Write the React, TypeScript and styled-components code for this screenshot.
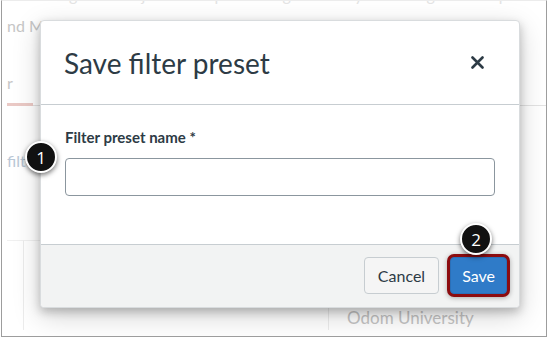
import React from "react";
import styled, { createGlobalStyle } from "styled-components";

const Global = createGlobalStyle`
  html, body { margin: 0; padding: 0; background: #ffffff; }
  body { font-family: Lato, "Open Sans", sans-serif; }
  * { box-sizing: border-box; }
`;

const Frame = styled.div`
  position: relative;
  width: 546px;
  height: 337px;
  margin-left: 1px;
  border-left: 1px solid #9d9d9d;
  border-right: 1px solid #9d9d9d;
  border-bottom: 1px solid #9d9d9d;
  border-top: 1px solid #ececec;
  overflow: hidden;
  background: #ffffff;
`;

const Page = styled.div`
  display: flex;
  flex-direction: column;
  padding-left: 5px;
  color: #c6c6c6;
  font-size: 16px;
`;

const ClippedLine = styled.div`
  margin-top: -17px;
  height: 22px;
  line-height: 22px;
  white-space: nowrap;
  color: #e4e4e4;
  padding-left: 62px;
  word-spacing: 60px;
`;

const TextLine = styled.div`
  margin-top: 9px;
  line-height: 22px;
  white-space: nowrap;
`;

const TabBar = styled.div`
  margin-top: 37px;
  display: flex;
  border-bottom: 1px solid #e3e3e3;
`;

const Tab = styled.div`
  width: 26px;
  height: 32px;
  line-height: 18px;
  border-bottom: 3px solid #eac9c5;
  margin-bottom: -1px;
`;

const FilterHint = styled.div`
  margin-top: 44px;
  color: #b9c7d6;
  line-height: 22px;
`;

const TableArea = styled.div`
  margin-top: 68px;
  display: flex;
  height: 90px;
`;

const TableCell = styled.div<{ $w: number }>`
  width: ${(p) => p.$w}px;
  border-top: 1px solid #f0f0f0;
  border-right: 1px solid #ececec;
`;

const University = styled.div`
  padding: 67px 0 0 18px;
  color: #c4c4c4;
  font-size: 17px;
  white-space: nowrap;
`;

const Dialog = styled.div`
  position: absolute;
  left: 38px;
  top: 19px;
  width: 480px;
  background: #ffffff;
  border-radius: 4px;
  border: 1px solid #d9dcde;
  box-shadow: 0 4px 10px rgba(0, 0, 0, 0.22), 0 8px 28px rgba(0, 0, 0, 0.18);
  display: flex;
  flex-direction: column;
`;

const Header = styled.div`
  height: 84px;
  display: flex;
  align-items: center;
  justify-content: space-between;
  padding: 0 34px 0 23px;
  border-bottom: 1px solid #c7cdd1;
`;

const Title = styled.h2`
  margin: 0;
  font-family: Lato, sans-serif;
  font-weight: 400;
  font-size: 28px;
  color: #2d3b45;
`;

const Close = styled.button`
  border: none;
  background: none;
  padding: 0;
  width: 16px;
  height: 16px;
  display: flex;
  align-items: center;
  justify-content: center;
`;

const Body = styled.div`
  padding: 22px 24px 48px 24px;
  display: flex;
  flex-direction: column;
`;

const Label = styled.label`
  font-family: Lato, sans-serif;
  font-weight: 700;
  font-size: 15px;
  color: #2d3b45;
  line-height: 20px;
  margin-bottom: 11px;
`;

const Input = styled.input`
  height: 38px;
  width: 100%;
  border: 1px solid #8b969e;
  border-radius: 4px;
  background: #ffffff;
`;

const Footer = styled.div`
  background: #f2f3f3;
  border-top: 1px solid #c7cdd1;
  border-radius: 0 0 4px 4px;
  display: flex;
  justify-content: flex-end;
  align-items: center;
  gap: 11px;
  padding: 12px 12px 13px 12px;
`;

const Button = styled.button<{ $primary?: boolean }>`
  height: 37px;
  padding: 0 ${(p) => (p.$primary ? 11 : 13)}px;
  border-radius: 4px;
  font-family: Lato, sans-serif;
  font-size: 16px;
  border: 1px solid ${(p) => (p.$primary ? "#2a6fb8" : "#c7cdd1")};
  background: ${(p) => (p.$primary ? "#2f7bc8" : "#f5f5f5")};
  color: ${(p) => (p.$primary ? "#ffffff" : "#2d3b45")};
  box-shadow: ${(p) =>
    p.$primary ? "0 0 0 3px #8c0c10, 0 1px 5px 3px rgba(0,0,0,0.3)" : "none"};
`;

const Badge = styled.div<{ $x: number; $y: number }>`
  position: absolute;
  left: ${(p) => p.$x}px;
  top: ${(p) => p.$y}px;
  width: 32px;
  height: 32px;
  border-radius: 50%;
  background: #111111;
  border: 2px solid #ffffff;
  box-shadow: 0 2px 5px rgba(0, 0, 0, 0.55);
  color: #ffffff;
  font-family: "Open Sans", sans-serif;
  font-size: 17px;
  display: flex;
  align-items: center;
  justify-content: center;
`;

export default function App() {
  return (
    <>
      <Global />
      <Frame>
        <Page>
          <ClippedLine>g j q g y g p ,</ClippedLine>
          <TextLine>nd Mathematics and Statistics Department</TextLine>
          <TabBar>
            <Tab>r</Tab>
          </TabBar>
          <FilterHint>filters</FilterHint>
          <TableArea>
            <TableCell $w={17} />
            <TableCell $w={305} />
            <University>Odom University</University>
          </TableArea>
        </Page>
        <Dialog>
          <Header>
            <Title>Save filter preset</Title>
            <Close aria-label="Close">
              <svg width="13" height="13" viewBox="0 0 13 13">
                <path
                  d="M1.5 1.5 L11.5 11.5 M11.5 1.5 L1.5 11.5"
                  stroke="#2d3b45"
                  strokeWidth="2.6"
                  strokeLinecap="round"
                />
              </svg>
            </Close>
          </Header>
          <Body>
            <Label>Filter preset name *</Label>
            <Input />
          </Body>
          <Footer>
            <Button>Cancel</Button>
            <Button $primary>Save</Button>
          </Footer>
        </Dialog>
        <Badge $x={23} $y={140}>1</Badge>
        <Badge $x={458} $y={222}>2</Badge>
      </Frame>
    </>
  );
}
